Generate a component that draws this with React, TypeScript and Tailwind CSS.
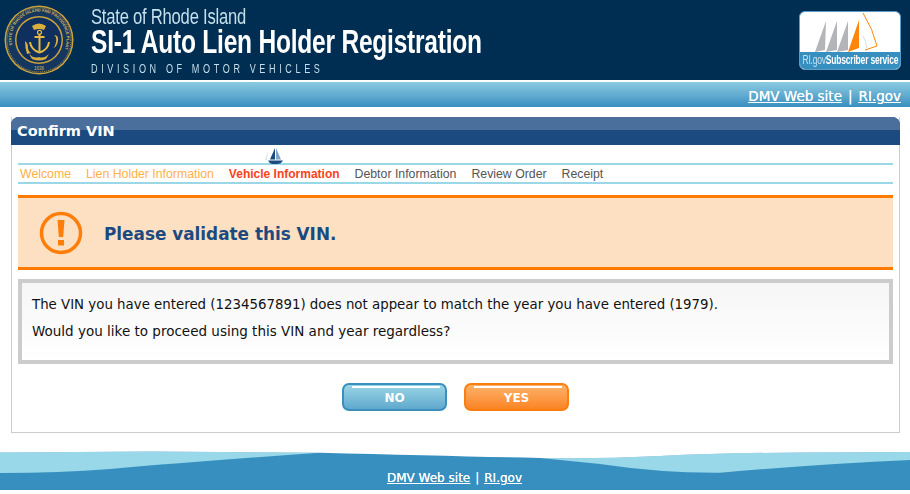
import React from "react";

function Seal() {
  return (
    <svg width="70" height="70" viewBox="0 0 70 70" className="shrink-0">
      <defs>
        <path id="sealArc" d="M35 35 m-26 8 a27.500 27.500 0 1 1 52 0" />
      </defs>
      <circle cx="35" cy="35" r="34.500" fill="#c9a23c" />
      <circle cx="35" cy="35" r="33" fill="#14365f" />
      <circle cx="35" cy="35" r="32" fill="none" stroke="#c9a23c" strokeWidth="1" strokeDasharray="1 1" />
      <circle cx="35" cy="35" r="24" fill="#c9a23c" />
      <circle cx="35" cy="35" r="22.500" fill="#0f2f5e" />
      <text fill="#d8b95e" fontSize="4" fontWeight="700" fontFamily="'Liberation Sans', sans-serif">
        <textPath href="#sealArc" startOffset="3">STATE OF RHODE ISLAND AND PROVIDENCE PLANTATIONS</textPath>
      </text>
      <path d="M28 21q7-5 14 0l-2 4q-5-2-10 0z" fill="#d9ae3c" />
      <circle cx="35.500" cy="27.300" r="2" fill="none" stroke="#e6bb40" strokeWidth="1.200" />
      <path d="M37.500 30v17M32.500 33h10M28 38q1 8 9.500 10.500q8.500-2.500 9.500-10.500" fill="none" stroke="#e6bb40" strokeWidth="2" transform="translate(-2 -1)" />
      <path d="M21 36q3 2 3 6t3 6l-4 1q-2-6-2-13zM50 30q3 2 2 7t-3 6q4-1 5-7t-4-6z" fill="#d9ae3c" />
      <path d="M25 49q5 5 10 3q5 2 10-3l-3 5q-7 3-14 0z" fill="#d9ae3c" />
      <text x="35" y="65" textAnchor="middle" fontSize="4.500" fill="#d8b95e" fontFamily="'Liberation Sans', sans-serif">1636</text>
    </svg>
  );
}

function LogoBadge() {
  return (
    <div className="flex h-[59px] w-[102px] flex-col overflow-hidden rounded-[6px] border border-[#5a9cc5] bg-white">
      <svg width="100" height="40" viewBox="0 0 100 40" className="shrink-0">
        <path d="M26 9L15 40l10-2z M37 9L26 40l11-2z M48 9L37 40l11-2z" fill="#b3b5b9" />
        <path d="M59 8L48 40l11-4z" fill="#ff8608" />
        <path d="M63 1q10 16 14 33l-12 4" fill="none" stroke="#ff8608" strokeWidth="1" />
        <path d="M63 24q3 5 4 12" fill="none" stroke="#ddd" strokeWidth="1" />
      </svg>
      <div className="flex h-[18px] items-center justify-center overflow-hidden bg-[#378fc0] font-['Liberation_Sans',sans-serif] text-[12.500px] tracking-[-0.300px] text-white">
        <div className="shrink-0 scale-x-[0.68] whitespace-nowrap">
          <span className="font-normal text-[#c5e2f0]">RI.gov</span>
          <span className="font-bold">Subscriber service</span>
        </div>
      </div>
    </div>
  );
}

function Boat() {
  return (
    <svg width="20" height="18" viewBox="0 0 20 18" className="absolute left-[247px] top-[2px]">
      <path d="M10 1L5 12.500h5z" fill="#1a4a80" />
      <path d="M11 1l5 11.500h-5z" fill="#7fa4c8" />
      <path d="M3 13.500h15q-2 3.500-6 3.500H7q-3-1-4-3.500z" fill="#1a4a80" />
      <path d="M3 4L0 13h2z" fill="#e2e2e2" />
    </svg>
  );
}

function Btn({ label, kind }: { label: string; kind: "no" | "yes" }) {
  const cls =
    kind === "no"
      ? "border-[#3a8fbe] bg-gradient-to-b from-[#9ad5e6] to-[#5fa9cd]"
      : "border-[#fb7e10] bg-gradient-to-b from-[#fdb268] to-[#fa8420]";
  return (
    <div className={`relative flex h-[28px] w-[105px] items-center justify-center rounded-[7px] border-2 pt-[2px] text-[12px] font-bold text-white ${cls}`}>
      <div className="absolute left-[8px] right-[5px] top-[1px] h-[2px] bg-white" />
      {label}
    </div>
  );
}

export default function App() {
  const steps = [
    { t: "Welcome", c: "text-[#ffb046]" },
    { t: "Lien Holder Information", c: "text-[#ffb046]" },
    { t: "Vehicle Information", c: "text-[12px] font-bold text-[#f9431a]" },
    { t: "Debtor Information", c: "text-[#555555]" },
    { t: "Review Order", c: "text-[#555555]" },
    { t: "Receipt", c: "text-[#555555]" },
  ];
  return (
    <div className="flex h-[494px] w-[910px] flex-col overflow-hidden bg-white font-['DejaVu_Sans',sans-serif]">
      <header className="flex h-[80px] items-start justify-between bg-[#002e52] pl-[4px] pr-[9px]">
        <div className="flex items-start">
          <div className="mt-[5px]"><Seal /></div>
          <div className="ml-[17px] flex origin-left scale-x-[0.755] flex-col font-['Liberation_Sans',sans-serif]">
            <div className="mt-[6px] h-[21px] text-[22px] leading-[21px] tracking-[-0.300px] text-[#c5dfec]">State of Rhode Island</div>
            <div className="h-[30px] text-[32.500px] font-bold leading-[30px] tracking-[-0.300px] text-white">SI-1 Auto Lien Holder Registration</div>
            <div className="mt-[6px] text-[12px] leading-[12px] tracking-[4.800px] text-[#c5dfec]">DIVISION OF MOTOR VEHICLES</div>
          </div>
        </div>
        <div className="mt-[11px]"><LogoBadge /></div>
      </header>
      <div className="h-[2px] bg-white" />
      <div className="flex h-[25px] items-center justify-end bg-gradient-to-b from-[#8ccbe0] to-[#378fc0] pr-[9px] pt-[3px] text-[13.500px] font-medium text-white [text-shadow:0_0_0.6px_white]">
        <a className="underline">DMV Web site</a>
        <span className="mx-[6px]">|</span>
        <a className="underline">RI.gov</a>
      </div>

      <main className="ml-[11px] mt-[10px] flex h-[316px] w-[889px] flex-col border-x border-b border-[#cccccc]">
        <div className="-mx-px flex h-[28px] flex-col rounded-t-[8px] bg-[#1a4a80]">
          <div className="h-[13px] rounded-t-[8px] bg-[#4a6f9c]" />
          <div className="-mt-[13px] pl-[6px] text-[14.500px] font-bold leading-[28px] text-white">Confirm VIN</div>
        </div>
        <div className="relative ml-[6px] mr-[6px] h-[40px] pt-[18px]">
          <Boat />
          <div className="flex h-[21px] items-center gap-[15px] border-y-2 border-[#9ad8e8] pl-[2px] pt-[1px] font-['Liberation_Sans',sans-serif] text-[12.300px]">
            {steps.map((s) => (
              <span key={s.t} className={s.c}>{s.t}</span>
            ))}
          </div>
        </div>
        <section className="mx-[6px] mt-[10px] flex h-[75px] items-center border-y-[3px] border-[#ff7a00] bg-[#fde0c2]">
          <svg width="44" height="44" viewBox="0 0 44 44" className="ml-[21px]">
            <circle cx="22" cy="22" r="19.500" fill="none" stroke="#ff7e0a" strokeWidth="3.500" />
            <path d="M18.500 9h7l-1.300 17h-4.400z M19 29h6v5.500h-6z" fill="#ff7e0a" />
          </svg>
          <h1 className="ml-[21px] pt-[5px] text-[16.850px] font-bold text-[#1a4a80]">Please validate this VIN.</h1>
        </section>
        <section className="mx-[6px] mt-[9px] h-[85px] border-[4px] border-[#cccccc] bg-gradient-to-b from-[#f6f6f6] to-white px-[10px] pt-[14px] text-[13.350px] leading-[15px] text-[#111111]">
          <p>The VIN you have entered (1234567891) does not appear to match the year you have entered (1979).</p>
          <p className="mt-[12px] text-[13.500px]">Would you like to proceed using this VIN and year regardless?</p>
        </section>
        <div className="mt-[19px] flex justify-center gap-[17px]">
          <Btn label="NO" kind="no" />
          <Btn label="YES" kind="yes" />
        </div>
      </main>

      <footer className="relative mt-[18px] h-[39px] bg-[#378fc0]">
        <svg width="910" height="39" viewBox="0 0 910 39" className="absolute left-0 top-0">
          <path d="M0 1.500L150 .5L320 1.700Q200 10 110 18Q60 22 0 22Z" fill="#98d8e8" />
          <path d="M540 7Q600 8 660 5Q720 2 800 1.500L910 1V9Q820 13 720 21.700Q660 22 600 13Q570 10 540 7Z" fill="#98d8e8" />
          <path d="M0 0H910V1L800 1.500Q720 2 660 5Q600 8 540 7Q450 5 320 1.700L150 .5L0 1.500Z" fill="#ffffff" />
        </svg>
        <div className="absolute bottom-[3px] left-0 right-0 flex justify-center pr-[1px] text-[12px] font-medium text-white [text-shadow:0_0_0.6px_white]">
          <a className="underline">DMV Web site</a>
          <span className="mx-[5px]">|</span>
          <a className="underline">RI.gov</a>
        </div>
      </footer>
      <div className="h-[4px] bg-white" />
    </div>
  );
}
